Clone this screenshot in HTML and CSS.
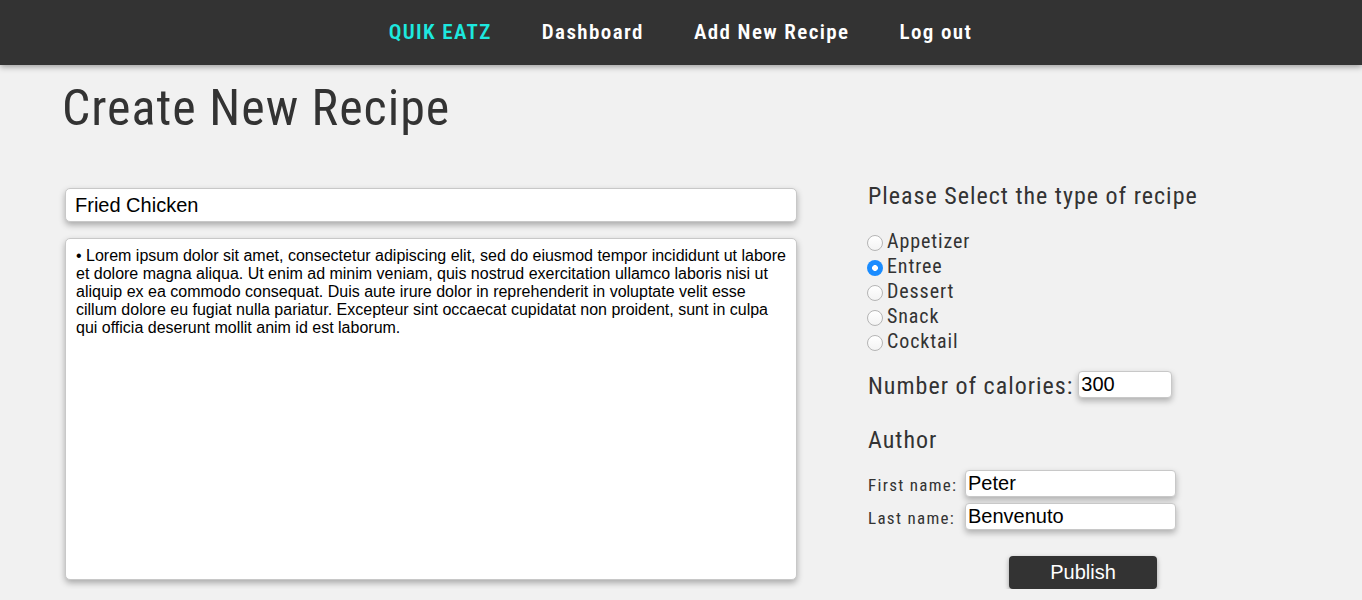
FILE: index.html
```html
<!DOCTYPE html>
<html lang="en">
<head>
<meta charset="utf-8">
<title>Create New Recipe</title>
<link rel="stylesheet" href="styles.css">
</head>
<body>
<nav class="topnav">
  <a class="nav-link brand" href="#">QUIK EATZ</a>
  <a class="nav-link" href="#">Dashboard</a>
  <a class="nav-link" href="#">Add New Recipe</a>
  <a class="nav-link" href="#">Log out</a>
</nav>
<main class="page">
  <h1 class="page-title">Create New Recipe</h1>
  <form class="recipe-form">
    <div class="left-col">
      <input class="title-input" type="text" value="Fried Chicken">
      <textarea class="body-input">• Lorem ipsum dolor sit amet, consectetur adipiscing elit, sed do eiusmod tempor incididunt ut labore et dolore magna aliqua. Ut enim ad minim veniam, quis nostrud exercitation ullamco laboris nisi ut aliquip ex ea commodo consequat. Duis aute irure dolor in reprehenderit in voluptate velit esse cillum dolore eu fugiat nulla pariatur. Excepteur sint occaecat cupidatat non proident, sunt in culpa qui officia deserunt mollit anim id est laborum.</textarea>
    </div>
    <div class="right-col">
      <h2 class="section-title">Please Select the type of recipe</h2>
      <div class="radio-list">
        <label class="radio-row"><input type="radio" name="type" class="radio"><span>Appetizer</span></label>
        <label class="radio-row"><input type="radio" name="type" class="radio" checked><span>Entree</span></label>
        <label class="radio-row"><input type="radio" name="type" class="radio"><span>Dessert</span></label>
        <label class="radio-row"><input type="radio" name="type" class="radio"><span>Snack</span></label>
        <label class="radio-row"><input type="radio" name="type" class="radio"><span>Cocktail</span></label>
      </div>
      <div class="calories-row">
        <label class="calories-label">Number of calories:</label>
        <input class="small-input calories-input" type="text" value="300">
      </div>
      <h2 class="section-title author-title">Author</h2>
      <div class="name-row first-name">
        <label class="name-label">First name:</label>
        <input class="small-input name-input" type="text" value="Peter">
      </div>
      <div class="name-row">
        <label class="name-label">Last name:</label>
        <input class="small-input name-input" type="text" value="Benvenuto">
      </div>
      <div class="publish-row">
        <button class="publish-btn" type="button">Publish</button>
      </div>
    </div>
  </form>
</main>
</body>
</html>
```

FILE: styles.css
```css
* { box-sizing: border-box; }
html, body {
  margin: 0;
  background: #f1f1f1;
  color: #333;
  font-family: "Roboto", "Liberation Sans", sans-serif;
  overflow: hidden;
}
.topnav {
  height: 65px;
  background: #333;
  display: flex;
  justify-content: center;
  align-items: center;
  gap: 50px;
  padding-right: 1px;
  padding-bottom: 1px;
  box-shadow: 0 2px 6px rgba(0,0,0,0.35);
  position: relative;
  z-index: 2;
}
.nav-link {
  font-family: "Roboto", sans-serif;
  font-stretch: 85%;
  font-weight: 600;
  font-size: 21px;
  letter-spacing: 1.4px;
  color: #fff;
  text-decoration: none;
  line-height: 1;
}
.nav-link.brand { color: #1de8df; }

.page {
  padding: 0 0 0 62px;
}
.page-title {
  margin: 0;
  padding-top: 18px;
  font-family: "Roboto", sans-serif;
  font-stretch: 85%;
  font-weight: 400;
  font-size: 50px;
  letter-spacing: 1px;
  line-height: 1;
  height: 123px;
}
.recipe-form {
  display: flex;
  gap: 71px;
  position: relative;
}
.recipe-form::after {
  content: "";
  position: absolute;
  left: 100px;
  right: 170px;
  top: 418px;
  height: 40px;
  box-shadow: 0 0 30px rgba(0,0,0,0.22);
  z-index: -1;
}
.left-col {
  width: 732px;
  margin-left: 3px;
  display: flex;
  flex-direction: column;
  gap: 16px;
}
.title-input, .body-input, .small-input {
  border: 1px solid #c8c8c8;
  border-radius: 5px;
  background: #fff;
  box-shadow: 0 3px 6px rgba(0,0,0,0.3);
  color: #000;
  font-family: "Liberation Sans", Arial, sans-serif;
  outline: none;
}
.title-input {
  height: 34px;
  font-size: 20px;
  padding: 0 9px;
}
.body-input {
  height: 342px;
  resize: none;
  font-size: 16px;
  line-height: 18px;
  padding: 8px 8px 0 10px;
}
.right-col {
  width: 380px;
  margin-top: -4px;
}
.section-title {
  margin: 0;
  font-family: "Roboto", sans-serif;
  font-stretch: 85%;
  font-weight: 400;
  font-size: 24px;
  letter-spacing: 1px;
  line-height: 1;
}
.radio-list {
  margin-top: 20px;
  display: flex;
  flex-direction: column;
}
.radio-row {
  display: flex;
  align-items: center;
  height: 25px;
  font-family: "Roboto", sans-serif;
  font-stretch: 85%;
  font-size: 20px;
  letter-spacing: 0.9px;
}
.radio {
  appearance: none;
  -webkit-appearance: none;
  width: 16px;
  height: 16px;
  margin: 4px 4px 0 -1px;
  border-radius: 50%;
  border: 1px solid #b5b5b5;
  background: linear-gradient(#fff, #f3f3f3);
  flex: none;
}
.radio:checked {
  border: none;
  background: radial-gradient(circle, #fff 0 2.6px, #1a8cff 3.2px);
}
.calories-row {
  margin-top: 19px;
  display: flex;
  align-items: center;
  gap: 5px;
}
.calories-label {
  font-family: "Roboto", sans-serif;
  font-stretch: 85%;
  font-size: 24px;
  letter-spacing: 1px;
}
.small-input {
  border-radius: 4px;
  font-size: 20px;
  padding: 0 2px;
  box-shadow: 0 3px 6px rgba(0,0,0,0.28);
}
.calories-input {
  width: 94px;
  height: 27px;
  margin-top: -4px;
}
.author-title { margin-top: 28px; }
.name-row {
  display: flex;
  align-items: center;
  margin-top: 6px;
}
.name-row.first-name { margin-top: 18px; }
.name-label {
  width: 97px;
  font-family: "Roboto", sans-serif;
  font-stretch: 85%;
  font-size: 17px;
  letter-spacing: 1.3px;
  padding-top: 3px;
}
.name-input {
  width: 211px;
  height: 27px;
}
.publish-row {
  margin-top: 26px;
  padding-left: 141px;
}
.publish-btn {
  width: 148px;
  height: 33px;
  background: #333;
  color: #fff;
  border: none;
  border-radius: 4px;
  font-family: "Liberation Sans", Arial, sans-serif;
  font-size: 20px;
  box-shadow: 0 2px 5px rgba(0,0,0,0.35);
}
```
